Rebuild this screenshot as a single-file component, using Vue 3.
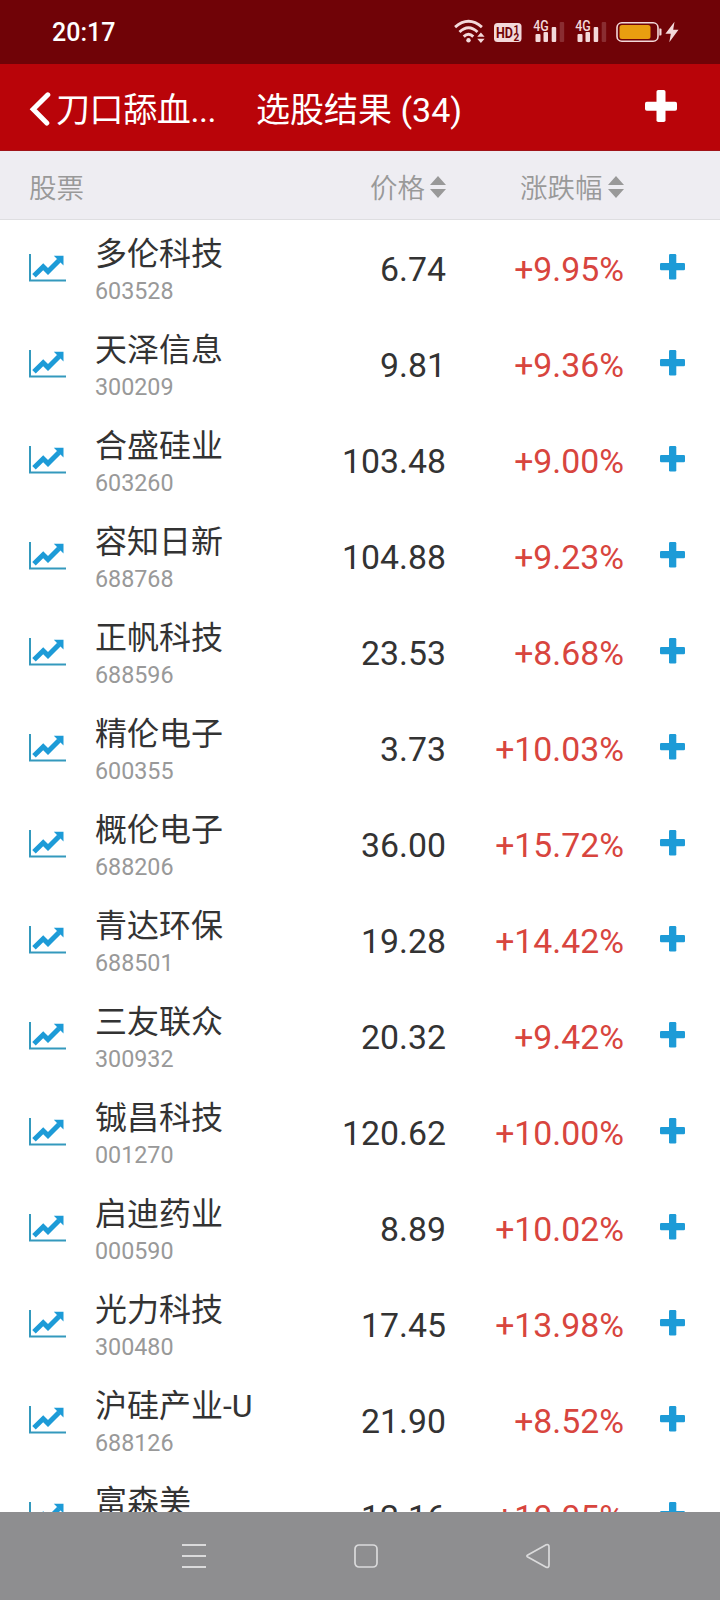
<script setup>
const stocks = [
  ['多伦科技', '603528', '6.74', '+9.95%'],
  ['天泽信息', '300209', '9.81', '+9.36%'],
  ['合盛硅业', '603260', '103.48', '+9.00%'],
  ['容知日新', '688768', '104.88', '+9.23%'],
  ['正帆科技', '688596', '23.53', '+8.68%'],
  ['精伦电子', '600355', '3.73', '+10.03%'],
  ['概伦电子', '688206', '36.00', '+15.72%'],
  ['青达环保', '688501', '19.28', '+14.42%'],
  ['三友联众', '300932', '20.32', '+9.42%'],
  ['铖昌科技', '001270', '120.62', '+10.00%'],
  ['启迪药业', '000590', '8.89', '+10.02%'],
  ['光力科技', '300480', '17.45', '+13.98%'],
  ['沪硅产业-U', '688126', '21.90', '+8.52%'],
  ['富森美', '', '12.16', '+10.05%'],
].map(([name, code, price, change]) => ({ name, code, price, change }))
</script>

<template>
  <div class="screen">
    <header class="status">
      <span class="time">20:17</span>
      <svg class="status-icons" width="240" height="64" viewBox="0 0 240 64">
        <g fill="none" stroke="#f3d9da" stroke-width="2.9">
          <path d="M1.100 27.200Q14.500 15.500 27.900 27.200" />
          <path d="M5.500 32Q14.500 23.500 23.500 32" />
          <path d="M9.700 36.600Q14.500 32 19.300 36.600" />
        </g>
        <circle cx="14.500" cy="40.300" r="2.200" fill="#f3d9da" />
        <path d="M23.200 36.800l3.700-4.200 3.700 4.200zM23.200 38.800l3.700 4.200 3.700-4.200z" fill="#f3d9da" />
        <rect x="40" y="23" width="27.500" height="19" rx="3.500" fill="#f3d9da" />
        <text x="42" y="38.200" class="hd" textLength="17" lengthAdjust="spacingAndGlyphs">HD</text>
        <text x="59.500" y="32.500" class="tiny">1</text>
        <text x="59.500" y="40.500" class="tiny">2</text>
        <g v-for="x in [0, 42]" :key="x" :transform="`translate(${x} 0)`" fill="#f3d9da">
          <text x="79.200" y="31.300" class="net" textLength="15.500" lengthAdjust="spacingAndGlyphs">4G</text>
          <rect x="81.500" y="34" width="5" height="8" rx="1" />
          <rect x="89.500" y="32" width="4.500" height="10" rx="1" />
          <rect x="97.700" y="27" width="4.500" height="15" rx="1" />
          <rect x="105.700" y="22" width="4.500" height="20" rx="1" opacity=".2" />
        </g>
        <rect x="163" y="22.800" width="41" height="18.400" rx="4.800" fill="none" stroke="#f3d9da" stroke-width="1.600" />
        <rect x="165.500" y="25" width="31" height="14" rx="2.500" fill="#e99d10" />
        <path d="M205.300 28.500h1.200q1 0 1 1v5q0 1-1 1h-1.200z" fill="#f3d9da" />
        <path d="M220.500 21.800L211.400 33.800H216.800L215.300 42.200L224.500 29.800H219.200z" fill="#f3d9da" />
      </svg>
    </header>

    <nav class="titlebar">
      <svg class="back" width="22" height="34" viewBox="0 0 22 34">
        <path d="M18.800 2.800L4.200 17.300L17.800 31" fill="none" stroke="#fff" stroke-width="5" stroke-linecap="round" stroke-linejoin="miter" />
      </svg>
      <span class="parent">刀口舔血...</span>
      <h1 class="title">选股结果 (34)</h1>
      <svg class="add-all" width="32" height="32" viewBox="0 0 32 32" fill="#fff">
        <rect x="11.500" y="0" width="9" height="32" rx="1.800" />
        <rect x="0" y="11.700" width="32" height="9" rx="1.800" />
      </svg>
    </nav>

    <div class="columns">
      <span class="c-stock">股票</span>
      <span class="c-sort c-price">价格<svg width="16" height="22" viewBox="0 0 16 22"><path d="M0 9L8 0L16 9zM0 13h16L8 22z" fill="#999" /></svg></span>
      <span class="c-sort c-change">涨跌幅<svg width="16" height="22" viewBox="0 0 16 22"><path d="M0 9L8 0L16 9zM0 13h16L8 22z" fill="#999" /></svg></span>
    </div>

    <main class="list">
      <div v-for="s in stocks" :key="s.name" class="row">
        <svg class="chart" width="37" height="28" viewBox="0 0 37 28">
          <path d="M1 0V26.500H37" fill="none" stroke="#3499bd" stroke-width="2" />
          <path d="M5 21.700L14.200 12.700L19 17.500L30 6.500" fill="none" stroke="#1d9bd7" stroke-width="5" />
          <path d="M24.800 1.700H34.500V11.400z" fill="#1d9bd7" />
        </svg>
        <div class="stock">
          <div class="name">{{ s.name }}</div>
          <div v-if="s.code" class="code">{{ s.code }}</div>
        </div>
        <div class="price">{{ s.price }}</div>
        <div class="change">{{ s.change }}</div>
        <svg class="plus" width="25" height="26" viewBox="0 0 25 26" fill="#1d9bd7">
          <rect x="9" y="0" width="7.300" height="25.500" rx="1.300" />
          <rect x="0" y="9" width="25" height="7.300" rx="1.300" />
        </svg>
      </div>
    </main>

    <footer class="navbar">
      <svg width="24" height="26" viewBox="0 0 24 26" fill="none" stroke="#dadadb" stroke-width="2">
        <path d="M0 2h24M0 13h24M0 24h24" />
      </svg>
      <svg width="24" height="26" viewBox="0 0 24 26" fill="none" stroke="#dadadb" stroke-width="1.700">
        <rect x="1" y="2" width="22" height="22" rx="4" />
      </svg>
      <svg width="24" height="26" viewBox="0 0 24 26" fill="none" stroke="#dadadb" stroke-width="1.700" stroke-linejoin="round">
        <path d="M1.800 11.900L20.200 1.800Q23 1 23 4V22Q23 25 20.200 24.200L1.800 14.100Q0 13 1.800 11.900z" />
      </svg>
    </footer>
  </div>
</template>

<style>
body {
  margin: 0;
}
</style>

<style scoped>
.screen {
  width: 720px;
  height: 1600px;
  display: flex;
  flex-direction: column;
  overflow: hidden;
  background: #fff;
  font-family: Roboto, "Noto Sans CJK SC", sans-serif;
}
svg {
  display: block;
  flex: none;
}
.status {
  flex: none;
  height: 64px;
  display: flex;
  justify-content: space-between;
  background: #700307;
  padding: 0 26px 0 52px;
}
.time {
  color: #fff;
  font-size: 25px;
  font-weight: 500;
  line-height: 66px;
}
.status-icons {
  overflow: visible;
}
.hd {
  font: bold 15px Roboto, sans-serif;
  fill: #700307;
}
.tiny {
  font: bold 10px Roboto, sans-serif;
  fill: #700307;
}
.net {
  font: 500 14.500px Roboto, sans-serif;
}
.titlebar {
  flex: none;
  height: 87px;
  box-sizing: border-box;
  display: flex;
  align-items: flex-start;
  background: #b90409;
  border-bottom: 1px solid #a01419;
  padding: 0 43px 0 29px;
  color: #fff;
  font-size: 34px;
  line-height: 92px;
}
.back {
  margin-top: 28px;
}
.parent {
  width: 200px;
  margin-left: 5px;
  letter-spacing: -0.4px;
}
.title {
  flex: 1;
  margin: 0;
  font: inherit;
}
.add-all {
  margin-top: 26px;
}
.columns {
  flex: none;
  height: 69px;
  box-sizing: border-box;
  display: flex;
  align-items: center;
  background: #eeedf2;
  border-bottom: 1px solid #dedee1;
  padding: 2px 0 0 29px;
  color: #999;
  font-size: 27.500px;
  font-weight: 350;
}
.c-stock {
  width: 341px;
}
.c-sort {
  display: flex;
  align-items: center;
  gap: 5px;
}
.c-sort svg {
  margin-top: 2px;
}
.c-price {
  width: 150px;
}
.list {
  flex: 1;
  min-height: 0;
  overflow: hidden;
}
.row {
  height: 96px;
  display: grid;
  grid-template-columns: 66px 201px 150px 178px 61px;
  padding-left: 29px;
}
.chart {
  margin-top: 34px;
}
.name {
  margin-top: 11px;
  height: 46px;
  line-height: 46px;
  font-size: 32px;
  color: #333;
  white-space: nowrap;
}
.code {
  font-size: 23.300px;
  line-height: 28px;
  color: #999;
}
.price,
.change {
  text-align: right;
  font-size: 33.800px;
  line-height: 99px;
  color: #333;
}
.change {
  color: #d8453e;
}
.plus {
  justify-self: end;
  margin: 34px 0 0;
}
.navbar {
  flex: none;
  height: 88px;
  box-sizing: border-box;
  display: flex;
  justify-content: space-between;
  padding: 31px 170px 0 182px;
  background: #8e8e90;
}
</style>
